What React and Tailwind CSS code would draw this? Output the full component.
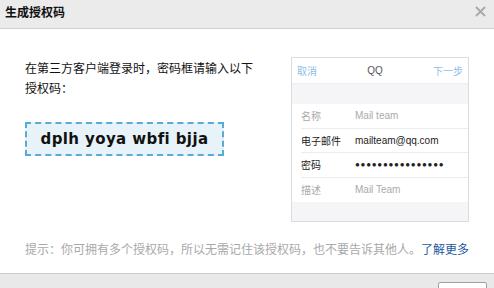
import React from "react";

const cjk = { fontFamily: '"Noto Sans CJK SC", "Liberation Sans", sans-serif' };

const rows = [
  { label: "名称", value: "Mail team", muted: true },
  { label: "电子邮件", value: "mailteam@qq.com" },
  { label: "密码", value: "●●●●●●●●●●●●●●●●", dots: true },
  { label: "描述", value: "Mail Team", muted: true },
];

const PhonePreview = () => (
  <div className="w-[178px] h-[165px] border border-[#dcdcdc] bg-[#f5f5f7] flex flex-col text-[10px]">
    <div className="h-[26px] bg-white flex items-center justify-between px-[5px] border-b border-[#efefef]">
      <span className="text-[#8fbde6]">取消</span>
      <span className="text-[#555]" style={{ fontFamily: '"Liberation Sans", sans-serif' }}>QQ</span>
      <span className="text-[#8fbde6]">下一步</span>
    </div>
    <div className="h-[20px]" />
    <div className="bg-white pl-[9px]">
      {rows.map((r, i) => (
        <div
          key={r.label}
          className={`h-[24.5px] flex items-center ${i < rows.length - 1 ? "border-b border-[#ececec]" : ""}`}
        >
          <span className={`w-[54px] ${r.muted ? "text-[#aaa]" : "text-[#222]"}`}>{r.label}</span>
          <span
            className={`${r.muted ? "text-[#aaa]" : "text-[#222]"} ${r.dots ? "text-[8px] tracking-[0.75px]" : ""}`}
            style={{ fontFamily: '"Liberation Sans", sans-serif' }}
          >
            {r.value}
          </span>
        </div>
      ))}
    </div>
  </div>
);

export default function App() {
  return (
    <div className="w-[494px] h-[288px] bg-white flex flex-col overflow-hidden" style={cjk}>
      <div className="h-[29px] shrink-0 bg-[#ebebeb] border-b border-[#cfcfcf] flex items-center justify-between pl-[5px] pr-[8px]">
        <span className="text-[12px] font-bold text-[#111] leading-none -mt-[4px]">生成授权码</span>
        <svg width="11" height="11" viewBox="0 0 11 11" className="-mt-[5px]">
          <path d="M1 1 L10 10 M10 1 L1 10" stroke="#a8a8a8" strokeWidth="1.8" />
        </svg>
      </div>

      <div className="flex-1 flex flex-col px-[25px]">
        <div className="flex justify-between pt-[28px]">
          <div className="flex flex-col">
            <p className="text-[12px] leading-[20px] text-[#111] w-[232px] pt-[1px]">
              在第三方客户端登录时，密码框请输入以下授权码：
            </p>
            <div
              className="mt-[24px] w-[199px] h-[34px] border-2 border-dashed border-[#5aaad6] bg-[#e8f2f9] flex items-center justify-center text-[15px] font-bold text-[#111] tracking-[0.4px]"
              style={{ fontFamily: '"DejaVu Sans", sans-serif' }}
            >
              dplh yoya wbfi bjja
            </div>
          </div>
          <div className="pr-[2px] -mr-[25px] w-[204px] flex pl-[1px]">
            <PhonePreview />
          </div>
        </div>
        <p className="mt-[17px] text-[12px] leading-[20px] text-[#a9a9a9] whitespace-nowrap">
          提示：你可拥有多个授权码，所以无需记住该授权码，也不要告诉其他人。
          <span className="text-[#1d5aa0]">了解更多</span>
        </p>
      </div>

      <div className="h-[15px] shrink-0 bg-[#e9e9e9] border-t border-[#cdcdcd] flex justify-end pr-[7px] pt-[8px]">
        <div className="w-[49px] h-[20px] bg-white border border-[#a0a0a0] rounded-[2px]" />
      </div>
    </div>
  );
}
